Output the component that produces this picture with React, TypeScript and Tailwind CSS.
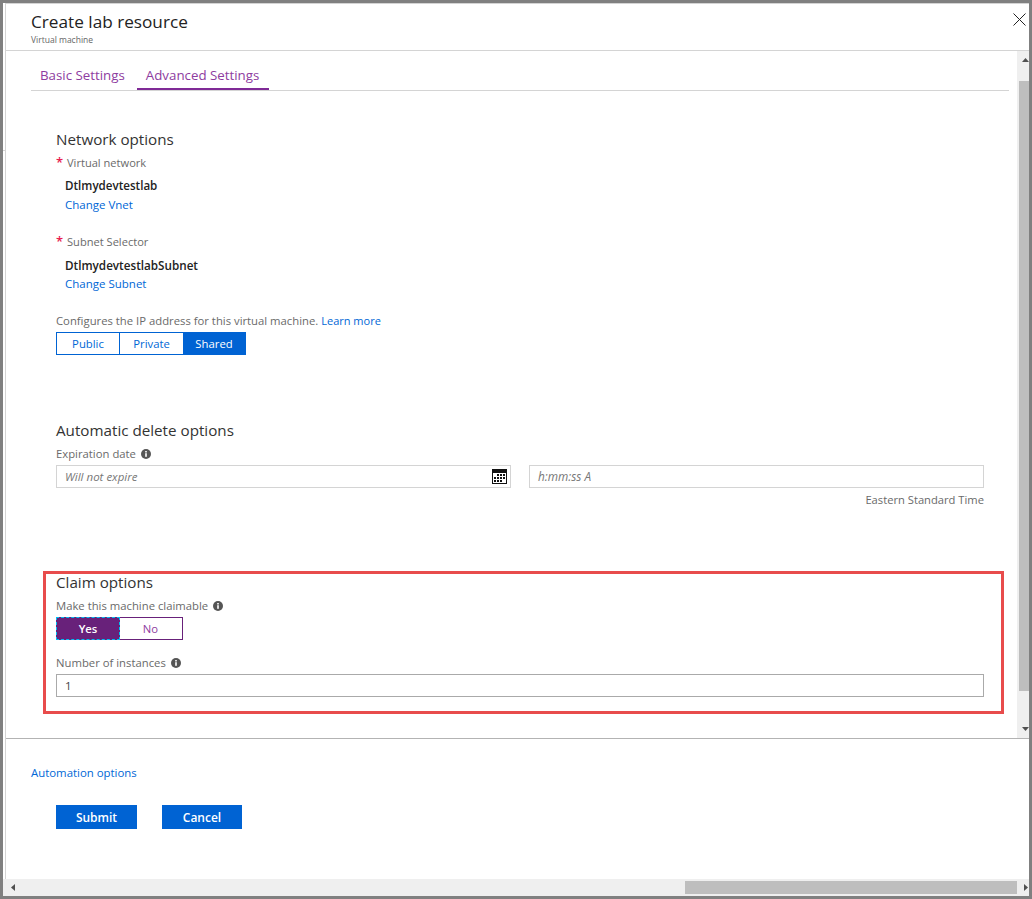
const font = { fontFamily: '"Open Sans", sans-serif' };

const Info = () => (
  <svg width="10" height="10" viewBox="0 0 10 10" className="ml-[5px] shrink-0">
    <circle cx="5" cy="5" r="5" fill="#555" />
    <rect x="4.2" y="4.2" width="1.6" height="3.6" fill="#fff" />
    <rect x="4.2" y="2" width="1.6" height="1.5" fill="#fff" />
  </svg>
);

const Calendar = () => (
  <svg width="15" height="15" viewBox="0 0 15 15" className="shrink-0">
    <rect width="15" height="15" fill="#111" />
    <rect x="1" y="4" width="13" height="10" fill="#fff" />
    <g fill="#111">
      <rect x="5" y="5" width="2" height="2" />
      <rect x="8" y="5" width="2" height="2" />
      <rect x="11" y="5" width="2" height="2" />
      <rect x="2" y="8" width="2" height="2" />
      <rect x="5" y="8" width="2" height="2" />
      <rect x="8" y="8" width="2" height="2" />
      <rect x="11" y="8" width="2" height="2" />
      <rect x="2" y="11" width="2" height="2" />
      <rect x="5" y="11" width="2" height="2" />
      <rect x="8" y="11" width="2" height="2" />
    </g>
  </svg>
);

const Label = ({ children }: { children: React.ReactNode }) => (
  <div className="flex h-5 items-center text-[11.3px] text-[#6a6a6a]">{children}</div>
);

const Required = ({ text }: { text: string }) => (
  <div className="flex h-5 items-center text-[11.1px] text-[#6a6a6a]">
    <span className="w-[11px] text-[13px] font-semibold text-[#e81c4f]">*</span>
    {text}
  </div>
);

const Heading = ({ children }: { children: React.ReactNode }) => (
  <h2 className="h-[26px] text-[15.2px] leading-6 text-[#333]">{children}</h2>
);

const Arrow = ({ points }: { points: string }) => (
  <svg width="7" height="7" viewBox="0 0 7 7">
    <polygon points={points} fill="#505050" />
  </svg>
);

export default function App() {
  return (
    <div style={font} className="relative flex h-[899px] w-[1032px] flex-col overflow-hidden border-[3px] border-[#808080] bg-white">
      <div className="absolute left-0 top-[147px] h-px w-[2px] bg-[#d4d4d4]" />
      <div className="flex min-h-0 flex-1 flex-col pl-[2px]">
        <div className="flex min-h-0 flex-1 flex-col border-l border-t border-[#d4d4d4]">
          <header className="relative h-[47px] shrink-0 border-b border-[#d4d4d4] pl-[25px] pt-[6px]">
            <h1 className="text-[17.2px] leading-6 text-[#222]">Create lab resource</h1>
            <p className="text-[8.5px] leading-3 text-[#666]">Virtual machine</p>
            <svg width="13" height="13" viewBox="0 0 13 13" className="absolute right-[3px] top-[9px]">
              <path d="M0.5 0.5 12.5 12.5M12.5 0.5 0.5 12.5" stroke="#222" strokeWidth="1" fill="none" />
            </svg>
          </header>

          <div className="flex h-[688px] shrink-0 border-b border-[#b3b3b3]">
            <main className="min-w-0 flex-1 pl-[25px] pr-[8px]">
              <nav className="flex h-[40px] gap-[3px] border-b border-[#d4d4d4] text-[13.3px] text-[#8e3ca0]">
                <div className="flex h-[39px] items-center px-[9px] pt-[11px]">Basic Settings</div>
                <div className="flex h-[39px] items-center border-b-[2px] border-[#7f2a96] pl-[9px] pr-[10px] pt-[13px]">
                  Advanced Settings
                </div>
              </nav>

              <div className="pl-[25px] pr-[25px] pt-[36px]">
                <Heading>Network options</Heading>
                <Required text="Virtual network" />
                <div className="mt-[3px] h-[19px] pl-[9px] text-[11.6px] font-semibold leading-5 text-[#222]">Dtlmydevtestlab</div>
                <a className="block h-5 pl-[9px] text-[11.5px] leading-5 text-[#0067d6]">Change Vnet</a>

                <div className="mt-[17px]">
                  <Required text="Subnet Selector" />
                </div>
                <div className="mt-[3px] h-5 pl-[9px] text-[11.7px] font-semibold leading-5 text-[#222]">DtlmydevtestlabSubnet</div>
                <a className="-mt-px block h-5 pl-[9px] text-[11.5px] leading-5 text-[#0067d6]">Change Subnet</a>

                <div className="mt-[17px] h-5 text-[11.3px] leading-5 text-[#6a6a6a]">
                  Configures the IP address for this virtual machine. <a className="text-[11px] text-[#0067d6]">Learn more</a>
                </div>
                <div className="mt-px flex h-[23px] w-[190px] border border-[#0063d3] text-[11.3px] text-[#0067d6]">
                  <div className="flex w-[63px] items-center justify-center border-r border-[#0063d3] pt-px">Public</div>
                  <div className="flex w-[63px] items-center justify-center pt-px">Private</div>
                  <div className="flex flex-1 items-center justify-center bg-[#0063d3] pt-px text-white">Shared</div>
                </div>

                <div className="mt-[63px]">
                  <Heading>Automatic delete options</Heading>
                </div>
                <Label>
                  Expiration date
                  <Info />
                </Label>
                <div className="mt-px grid grid-cols-2 gap-[18px]">
                  <div className="flex h-[23px] items-center justify-between border border-[#d4d4d4] pl-2 pr-[3px] text-[11.5px] italic text-[#777]">
                    <span className="pt-px">Will not expire</span>
                    <Calendar />
                  </div>
                  <div className="flex h-[23px] items-center border border-[#d4d4d4] pl-2 pt-px text-[11.8px] italic text-[#777]">
                    h:mm:ss A
                  </div>
                </div>
                <div className="mt-[2px] h-5 text-right text-[11.2px] leading-5 text-[#6a6a6a]">Eastern Standard Time</div>

                <section className="-ml-[13px] -mr-[20px] mt-[61px] h-[143px] border-[3px] border-[#e84c4c] pl-[10px] pr-[17px]">
                  <h2 className="-mt-[2px] h-[24px] text-[15.2px] leading-5 text-[#333]">Claim options</h2>
                  <Label>
                    Make this machine claimable
                    <Info />
                  </Label>
                  <div className="mt-px flex h-[23px] w-[127px] border border-[#68217a] text-[11.3px] text-[#8e3ca0]">
                    <div className="-m-px flex w-[64px] items-center justify-center border border-dashed border-[#00bcf2] bg-[#68217a] pt-px font-semibold text-white">
                      Yes
                    </div>
                    <div className="flex flex-1 items-center justify-center pt-px">No</div>
                  </div>
                  <div className="mt-[13px]">
                    <Label>
                      Number of instances
                      <Info />
                    </Label>
                  </div>
                  <div className="mt-px flex h-[23px] items-center border border-[#aaa] pl-2 text-[11.5px] text-[#444]">1</div>
                </section>
              </div>
            </main>

            <div className="flex w-[12px] shrink-0 flex-col bg-[#efefef] pl-[2px]">
              <div className="flex h-[30px] items-start justify-end pt-[6px]">
                <Arrow points="3.5,1 7,5 0,5" />
              </div>
              <div className="h-[610px] w-full bg-[#bebebe]" />
              <div className="flex flex-1 items-end justify-end pb-[6px]">
                <Arrow points="0,2 7,2 3.5,6" />
              </div>
            </div>
          </div>

          <footer className="min-h-0 flex-1 pl-[25px]">
            <a className="mt-[24px] block h-5 text-[11.4px] leading-5 text-[#0067d6]">Automation options</a>
            <div className="ml-[25px] mt-[22px] flex gap-[25px] text-[12px] font-semibold text-white">
              <button className="h-6 w-[81px] bg-[#0063d3] pt-px">Submit</button>
              <button className="h-6 w-[80px] bg-[#0063d3] pt-px">Cancel</button>
            </div>
          </footer>
        </div>
      </div>

      <div className="flex h-[17px] shrink-0 items-center bg-[#efefef] pl-[7px]">
        <Arrow points="1,3.5 5,0 5,7" />
        <div className="ml-[668px] h-[13px] w-[332px] bg-[#bebebe]" />
        <div className="ml-auto">
          <Arrow points="2,0 6,3.5 2,7" />
        </div>
      </div>
    </div>
  );
}
